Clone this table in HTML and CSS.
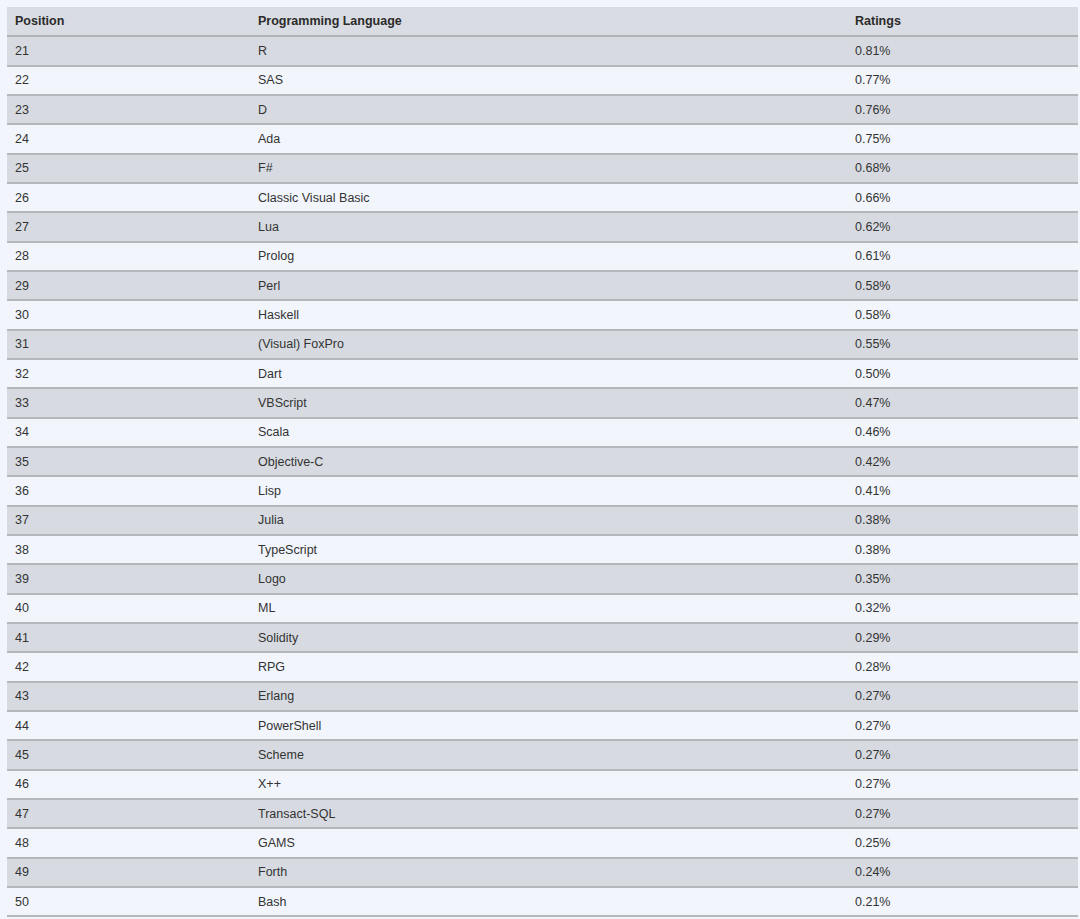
FILE: index.html
```html
<!DOCTYPE html>
<html>
<head>
<meta charset="utf-8">
<link rel="stylesheet" href="styles.css">
</head>
<body>
<table class="rank">
<thead>
<tr><th class="c1">Position</th><th class="c2">Programming Language</th><th class="c3">Ratings</th></tr>
</thead>
<tbody>
<tr class="odd"><td>21</td><td>R</td><td>0.81%</td></tr>
<tr><td>22</td><td>SAS</td><td>0.77%</td></tr>
<tr class="odd"><td>23</td><td>D</td><td>0.76%</td></tr>
<tr><td>24</td><td>Ada</td><td>0.75%</td></tr>
<tr class="odd"><td>25</td><td>F#</td><td>0.68%</td></tr>
<tr><td>26</td><td>Classic Visual Basic</td><td>0.66%</td></tr>
<tr class="odd"><td>27</td><td>Lua</td><td>0.62%</td></tr>
<tr><td>28</td><td>Prolog</td><td>0.61%</td></tr>
<tr class="odd"><td>29</td><td>Perl</td><td>0.58%</td></tr>
<tr><td>30</td><td>Haskell</td><td>0.58%</td></tr>
<tr class="odd"><td>31</td><td>(Visual) FoxPro</td><td>0.55%</td></tr>
<tr><td>32</td><td>Dart</td><td>0.50%</td></tr>
<tr class="odd"><td>33</td><td>VBScript</td><td>0.47%</td></tr>
<tr><td>34</td><td>Scala</td><td>0.46%</td></tr>
<tr class="odd"><td>35</td><td>Objective-C</td><td>0.42%</td></tr>
<tr><td>36</td><td>Lisp</td><td>0.41%</td></tr>
<tr class="odd"><td>37</td><td>Julia</td><td>0.38%</td></tr>
<tr><td>38</td><td>TypeScript</td><td>0.38%</td></tr>
<tr class="odd"><td>39</td><td>Logo</td><td>0.35%</td></tr>
<tr><td>40</td><td>ML</td><td>0.32%</td></tr>
<tr class="odd"><td>41</td><td>Solidity</td><td>0.29%</td></tr>
<tr><td>42</td><td>RPG</td><td>0.28%</td></tr>
<tr class="odd"><td>43</td><td>Erlang</td><td>0.27%</td></tr>
<tr><td>44</td><td>PowerShell</td><td>0.27%</td></tr>
<tr class="odd"><td>45</td><td>Scheme</td><td>0.27%</td></tr>
<tr><td>46</td><td>X++</td><td>0.27%</td></tr>
<tr class="odd"><td>47</td><td>Transact-SQL</td><td>0.27%</td></tr>
<tr><td>48</td><td>GAMS</td><td>0.25%</td></tr>
<tr class="odd"><td>49</td><td>Forth</td><td>0.24%</td></tr>
<tr><td>50</td><td>Bash</td><td>0.21%</td></tr>
</tbody>
</table>
</body>
</html>
```
FILE: styles.css
```css
html, body {
  margin: 0;
  padding: 0;
  background: #f2f6fc;
}
body {
  padding: 7px 2px 0 7px;
  font-family: "Liberation Sans", Arial, sans-serif;
  font-size: 12.5px;
  color: #333333;
}
.rank {
  width: 1071px;
  border-collapse: collapse;
  table-layout: fixed;
}
.rank th, .rank td {
  height: 27.33px;
  padding: 0 8px;
  text-align: left;
  vertical-align: middle;
  border-bottom: 2px solid #b4b9be;
  box-sizing: border-box;
}
.rank tr {
  height: 29.33px;
}
.rank th {
  font-weight: bold;
  background: #d9dce2;
  color: #2b2b2b;
  border-bottom-color: #aeb3b8;
}
.rank .c1 { width: 243px; }
.rank .c2 { width: 597px; }
.rank .c3 { width: 231px; }
.rank tr.odd td {
  background: #d7dbe1;
}
```
